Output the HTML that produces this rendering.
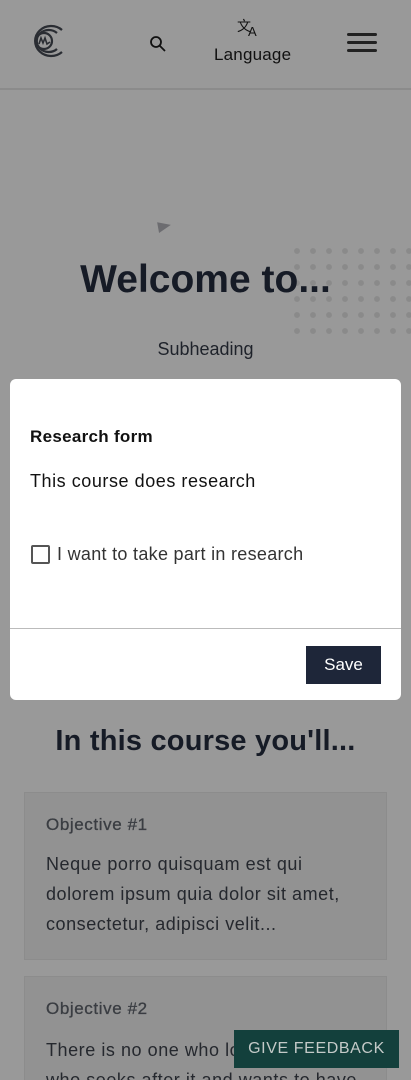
<!DOCTYPE html>
<html style="height:1080px;overflow:hidden"><head><style>
*{margin:0;padding:0;box-sizing:border-box}
body{width:411px;height:1080px;overflow:hidden;background:#999;font-family:"Liberation Sans",sans-serif;position:relative;color:#111}
.a{position:absolute}
.dots{left:291px;top:245px;width:120px;height:90px;background-image:radial-gradient(circle,#8a8a8a 2.6px,transparent 3.2px);background-size:16px 16px;background-position:-2px -2px}
.card{left:24px;width:363px;background:#929292;border:1px solid #8c8c8c}
.ct{font-size:17px;color:#3a3d42;letter-spacing:.6px;-webkit-text-stroke:.3px #3a3d42}
.cb{font-size:18px;line-height:30px;color:#25282e;letter-spacing:.55px}
</style></head><body>
<svg class="a" style="left:28px;top:24px" width="38" height="34" viewBox="0 0 38 34" fill="none" stroke="#2a2d33" stroke-width="2.2">
<path d="M34 6 A16 15 0 1 0 34 28"/><path d="M29 9 A12 11 0 1 0 29 25"/><circle cx="16" cy="17" r="8"/>
<path d="M11 20 l2 -6 l2 5 l2 -5 l2 6 l3 -2" stroke-width="1.6"/></svg>
<svg class="a" style="left:149px;top:35px" width="18" height="18" viewBox="0 0 18 18" fill="none" stroke="#111" stroke-width="1.8"><circle cx="7" cy="7" r="5"/><path d="M11 11 L16 16"/></svg>
<div class="a" style="left:237px;top:16px;font-size:14px;color:#111">文<span style="font-size:13px;position:relative;top:5px;left:-3px">A</span></div>
<div class="a" style="left:214px;top:45px;font-size:17px;color:#111;letter-spacing:.2px">Language</div>
<div class="a" style="left:347px;top:33px;width:30px;height:3px;background:#222;border-radius:2px"></div>
<div class="a" style="left:347px;top:41px;width:30px;height:3px;background:#222;border-radius:2px"></div>
<div class="a" style="left:347px;top:49px;width:30px;height:3px;background:#222;border-radius:2px"></div>
<div class="a" style="left:0;top:88px;width:411px;height:2px;background:#8b8b8b"></div>
<div class="a" style="left:158px;top:221px;width:0;height:0;border-left:13px solid #6c6c70;border-top:5px solid transparent;border-bottom:6px solid transparent;transform:rotate(-10deg)"></div>
<div class="dots a"></div>
<div class="a" style="left:0;width:411px;top:258px;text-align:center;font-size:39px;font-weight:bold;color:#161b26">Welcome to...</div>
<div class="a" style="left:0;width:411px;top:339px;text-align:center;font-size:18px;color:#1e222a">Subheading</div>
<div class="a" style="left:10px;top:379px;width:391px;height:321px;background:#fff;border-radius:6px">
 <div class="a" style="left:20px;top:48px;font-size:17px;font-weight:bold;color:#111;letter-spacing:.3px">Research form</div>
 <div class="a" style="left:20px;top:92px;font-size:18px;color:#111;letter-spacing:.55px">This course does research</div>
 <div class="a" style="left:21px;top:166px;width:19px;height:19px;border:2px solid #555;border-radius:2px"></div>
 <div class="a" style="left:47px;top:165px;font-size:18px;color:#333;letter-spacing:.3px">I want to take part in research</div>
 <div class="a" style="left:0;top:249px;width:391px;height:1px;background:#bbb"></div>
 <div class="a" style="left:296px;top:267px;width:75px;height:38px;background:#1e2639;color:#fff;font-size:17px;text-align:center;line-height:38px">Save</div>
</div>
<div class="a" style="left:0;width:411px;top:725px;text-align:center;font-size:29px;font-weight:bold;color:#161b26;letter-spacing:.2px">In this course you'll...</div>
<div class="card a" style="top:792px;height:168px">
 <div class="a ct" style="left:21px;top:22px">Objective #1</div>
 <div class="a cb" style="left:21px;top:56px">Neque porro quisquam est qui<br>dolorem ipsum quia dolor sit amet,<br>consectetur, adipisci velit...</div>
</div>
<div class="card a" style="top:976px;height:140px">
 <div class="a ct" style="left:21px;top:22px">Objective #2</div>
 <div class="a cb" style="left:21px;top:58px">There is no one who loves pain itself,<br>who seeks after it and wants to have</div>
</div>
<div class="a" style="left:234px;top:1030px;width:165px;height:38px;background:#13403c;color:#c4cac8;font-size:16px;text-align:center;line-height:38px;letter-spacing:.6px">GIVE FEEDBACK</div>
</body></html>
